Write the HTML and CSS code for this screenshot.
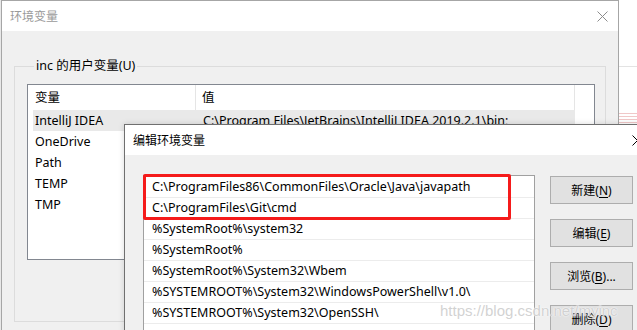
FILE: index.html
```html
<!DOCTYPE html>
<html lang="zh-CN">
<head>
    <meta charset="UTF-8">
    <title>编辑环境变量</title>
    <link rel="stylesheet" href="styles.css">
</head>
<body>
    <div class="desk">
        <div class="side-strip">
            <div class="side-line"></div>
            <div class="side-marks"></div>
        </div>

        <!-- background dialog -->
        <div class="win win-back">
            <div class="titlebar">
                <span class="title">环境变量</span>
                <svg class="close" width="11" height="11" viewBox="0 0 11 11">
                    <path d="M0.5 0.5 L10.5 10.5 M10.5 0.5 L0.5 10.5" stroke="#8c8c8c" stroke-width="1" fill="none"/>
                </svg>
            </div>
            <div class="win-body">
                <fieldset class="group">
                    <legend>inc 的用户变量(U)</legend>
                    <div class="listview">
                        <div class="lv-head">
                            <div class="c1">变量</div>
                            <div class="c2">值</div>
                        </div>
                        <div class="lv-row selected">
                            <div class="c1">IntelliJ IDEA</div>
                            <div class="c2">C:\Program Files\JetBrains\IntelliJ IDEA 2019.2.1\bin;</div>
                        </div>
                        <div class="lv-row"><div class="c1">OneDrive</div><div class="c2"></div></div>
                        <div class="lv-row"><div class="c1">Path</div><div class="c2"></div></div>
                        <div class="lv-row"><div class="c1">TEMP</div><div class="c2"></div></div>
                        <div class="lv-row"><div class="c1">TMP</div><div class="c2"></div></div>
                    </div>
                </fieldset>
            </div>
        </div>

        <!-- edit dialog on top -->
        <div class="win win-front">
            <div class="titlebar">
                <span class="title">编辑环境变量</span>
                <svg class="close" width="11" height="11" viewBox="0 0 11 11">
                    <path d="M0.5 0.5 L10.5 10.5 M10.5 0.5 L0.5 10.5" stroke="#000" stroke-width="1" fill="none"/>
                </svg>
            </div>
            <div class="win-body edit-body">
                <div class="pathlist">
                    <div class="mark"></div>
                    <div class="item">C:\ProgramFiles86\CommonFiles\Oracle\Java\javapath</div>
                    <div class="item">C:\ProgramFiles\Git\cmd</div>
                    <div class="item">%SystemRoot%\system32</div>
                    <div class="item">%SystemRoot%</div>
                    <div class="item">%SystemRoot%\System32\Wbem</div>
                    <div class="item">%SYSTEMROOT%\System32\WindowsPowerShell\v1.0\</div>
                    <div class="item">%SYSTEMROOT%\System32\OpenSSH\</div>
                </div>
                <div class="buttons">
                    <button>新建(<u>N</u>)</button>
                    <button>编辑(<u>E</u>)</button>
                    <button>浏览(<u>B</u>)...</button>
                    <button>删除(<u>D</u>)</button>
                </div>
            </div>
        </div>

        <div class="watermark">https://blog.csdn.net/myinc</div>
    </div>
</body>
</html>
```

FILE: styles.css
```css
body {
    margin: 0;
    font-family: 'Noto Sans', 'Noto Sans CJK SC', sans-serif;
    font-size: 12px;
    color: #000;
    background: #fff;
}
.desk {
    position: relative;
    width: 637px;
    height: 330px;
    overflow: hidden;
    background: #e8e8e8;
}
.side-strip {
    position: absolute;
    left: 619px;
    top: 0;
    width: 18px;
    height: 330px;
    background: #fff;
}
.side-line {
    margin-top: 66px;
    height: 1px;
    background: #e3e3e3;
}
.side-marks {
    margin-top: 44px;
    height: 12px;
    background: repeating-linear-gradient(#fff 0 2px, #f0c8c8 2px 3px);
}

/* windows */
.win {
    position: absolute;
    box-sizing: border-box;
    display: flex;
    flex-direction: column;
}
.win-back {
    left: 1px;
    top: 0;
    width: 618px;
    height: 345px;
    border: 1px solid #a6a6a6;
}
.win-front {
    left: 124px;
    top: 124px;
    width: 540px;
    height: 280px;
    border: 1px solid #6f6f6f;
    box-shadow: 0 0 6px rgba(0, 0, 0, 0.15);
}
.titlebar {
    flex-shrink: 0;
    height: 30px;
    background: #fff;
    display: flex;
    align-items: center;
    justify-content: space-between;
    padding: 0 0 0 8px;
}
.win-back .titlebar {
    padding-right: 10px;
}
.win-back .title {
    color: #9a9a9a;
}
.win-front .titlebar {
    padding-right: 20px;
}
.win-body {
    flex: 1;
    background: #f0f0f0;
}

/* user variables group */
.group {
    margin: 27px 0 0 12px;
    padding: 10px 0 0 12px;
    width: 592px;
    height: 264px;
    box-sizing: border-box;
    border: 1px solid #dcdcdc;
    min-width: 0;
}
.group legend {
    margin-left: 7px;
    padding: 0 2px;
    line-height: 16px;
    font-size: 12.5px;
}
.listview {
    width: 568px;
    height: 176px;
    box-sizing: border-box;
    border: 1px solid #828790;
    background: #fff;
    font-size: 12.5px;
}
.lv-head {
    display: flex;
    height: 25px;
    align-items: stretch;
}
.lv-head .c1 {
    width: 168px;
    padding-left: 7px;
    border-right: 1px solid #e5e5e5;
    box-sizing: border-box;
    line-height: 25px;
}
.lv-head .c2 {
    width: 379px;
    padding-left: 6px;
    border-right: 1px solid #e5e5e5;
    box-sizing: border-box;
    line-height: 25px;
}
.lv-row {
    display: flex;
    height: 21px;
    line-height: 21px;
    margin-left: 5px;
    width: 542px;
    white-space: nowrap;
}
.lv-row.selected {
    background: #e9e9e9;
}
.lv-row .c1 {
    width: 164px;
    padding-left: 2px;
    box-sizing: border-box;
}
.lv-row .c2 {
    padding-left: 6px;
}

/* edit dialog */
.edit-body {
    display: flex;
    align-items: flex-start;
    gap: 15px;
    padding: 20px 0 0 18px;
}
.pathlist {
    position: relative;
    flex-shrink: 0;
    width: 392px;
    height: 200px;
    box-sizing: border-box;
    border: 1px solid #a0a0a0;
    background: #fff;
    padding-top: 1px;
    font-size: 12.5px;
}
.item {
    height: 20px;
    line-height: 20px;
    padding-left: 8px;
    border-bottom: 1px solid #ececec;
    white-space: nowrap;
}
.mark {
    position: absolute;
    left: -1px;
    top: -2px;
    width: 368px;
    height: 46px;
    box-sizing: border-box;
    border: 3px solid #f51b1b;
    border-radius: 2px;
}
.buttons {
    display: flex;
    flex-direction: column;
    gap: 15px;
    padding-top: 1px;
}
.buttons button {
    width: 83px;
    height: 28px;
    margin: 0;
    padding: 0;
    background: #e1e1e1;
    border: 1px solid #adadad;
    font-family: inherit;
    font-size: 12px;
    color: #000;
}
.buttons u {
    text-underline-offset: 2px;
}

.watermark {
    position: absolute;
    left: 440px;
    top: 302px;
    font-family: 'Liberation Sans', sans-serif;
    font-size: 15px;
    color: rgba(195, 195, 195, 0.75);
    text-shadow: 0 0 2px #fff, 0 0 1px #fff;
    white-space: nowrap;
}
```
